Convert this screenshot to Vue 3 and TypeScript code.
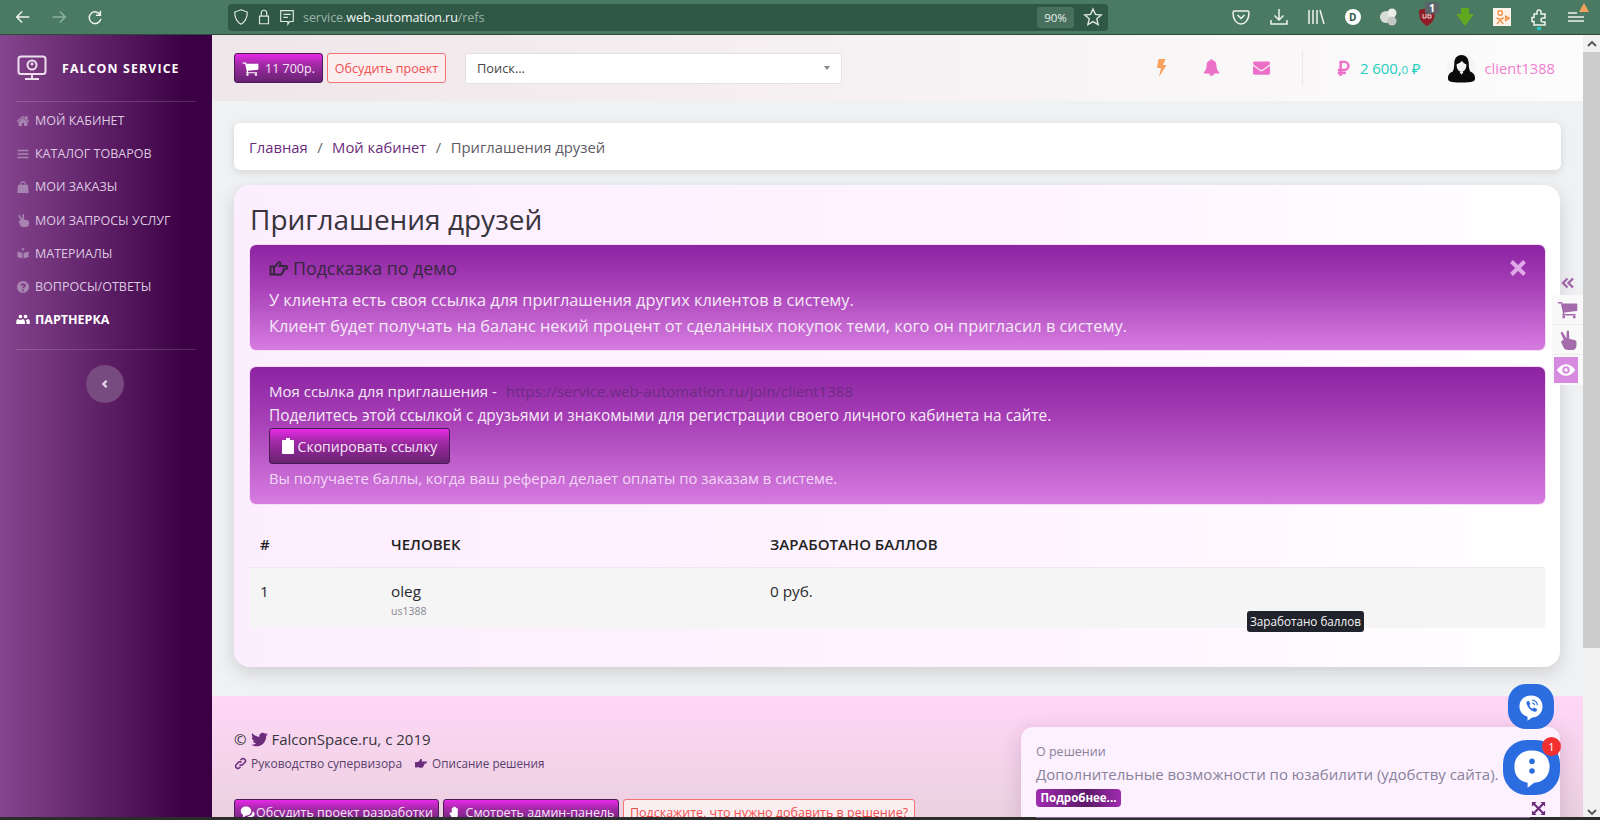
<script setup lang="ts">
interface Item { label: string; d: string; active?: boolean }
const P = {
  home: 'M1472 992v480q0 26-19 45t-45 19h-384v-384h-256v384h-384q-26 0-45-19t-19-45v-480q0-1 .5-3t.5-3l575-474 575 474q1 2 1 6zm223-69l-62 74q-8 9-21 11h-3q-13 0-21-7l-692-577-692 577q-12 8-24 7-13-2-21-11l-62-74q-8-10-7-23.5t11-21.5l719-599q32-26 76-26t76 26l244 204v-195q0-14 9-23t23-9h192q14 0 23 9t9 23v408l219 182q10 8 11 21.5t-7 23.5z',
  bars: 'M200 350h1392v190H200zM200 800h1392v190H200zM200 1250h1392v190H200z',
  bag: 'M560 600V460q0-170 150-260t376 0q146 90 146 260v140h300l80 1000q4 60-60 60H240q-64 0-60-60l80-1000zm130 0h412V460q0-110-206-140-206 30-206 140z',
  peace: 'M300 330l170-90 340 560 20-650h190l30 720 120-20q90-10 120 60l90-10q90 0 110 70 130-20 170 90v350q0 320-300 380H900q-210 0-320-170L370 1180q-50-120 60-190l150-60z',
  gift: 'M896 240a170 170 0 1 1-.1 0zM180 700l640 180v720L180 1420zM1612 700l-640 180v720l640-180z',
  q: 'M896 128a768 768 0 1 0 .1 0zM1010 1440H780v-220h230zm190-580q-60 70-150 110-40 20-40 90H780q0-140 110-200 120-60 120-130 0-60-110-60-100 0-130 110L570 650q50-240 330-240 300 0 340 220 10 140-40 230z',
  users: 'M570 220a230 230 0 1 1-.1 0zM1220 220a230 230 0 1 1-.1 0zM40 1400V1060q0-240 240-290 130 110 290 110t290-110q170 30 220 200 70 110 70 240v190zM1240 880q160 0 280-110 240 50 240 290v340h-410v-190q0-170-110-330z',
  cart: 'M704 1536q0 52-38 90t-90 38-90-38-38-90 38-90 90-38 90 38 38 90zm896 0q0 52-38 90t-90 38-90-38-38-90 38-90 90-38 90 38 38 90zm128-1088v512q0 24-16.5 42.5t-40.5 21.5l-1044 122q13 60 13 70 0 16-24 64h920q26 0 45 19t19 45-19 45-45 19h-1024q-26 0-45-19t-19-45q0-11 8-31.5t16-36 21.5-40 15.5-29.5l-177-823h-204q-26 0-45-19t-19-45 19-45 45-19h256q16 0 28.5 6.5t19.5 15.5 13 24.5 8 26 5.5 29.5 4.5 26h1201q26 0 45 19t19 45z',
  bell: 'M912 1696q0-16-16-16-59 0-101.5-42.5t-42.5-101.5q0-16-16-16t-16 16q0 73 51.5 124.5t124.5 51.5q16 0 16-16zm816-288q0 52-38 90t-90 38h-448q0 106-75 181t-181 75-181-75-75-181h-448q-52 0-90-38t-38-90q50-42 91-88t85-119.5 74.5-158.5 50-206 19.5-260q0-152 117-282.5t307-158.5q-8-19-8-39 0-40 28-68t68-28 68 28 28 68q0 20-8 39 190 28 307 158.5t117 282.5q0 139 19.5 260t50 206 74.5 158.5 85 119.5 91 88z',
  mail: 'M1792 710v794q0 66-47 113t-113 47h-1472q-66 0-113-47t-47-113v-794q44 49 101 87 362 246 497 345 57 42 92.5 65.5t94.5 48 110 24.5h2q51 0 110-24.5t94.5-48 92.5-65.5q170-123 498-345 57-39 100-87zm0-294q0 79-49 151t-122 123q-376 261-468 325-10 7-42.5 30.5t-54 38-52 32.5-57.5 27-50 9h-2q-23 0-50-9t-57.5-27-52-32.5-54-38-42.5-30.5q-91-64-262-182.5t-205-142.5q-62-42-117-115.5t-55-136.5q0-78 41.5-130t118.5-52h1472q65 0 112.5 47t47.5 113z',
  bird: 'M1684 408q-67 98-162 167 1 14 1 42 0 130-38 259.5t-115.5 248.5-184.5 210.5-258 146-323 54.5q-271 0-496-145 35 4 78 4 225 0 401-138-105-2-188-64.5t-114-159.5q33 5 61 5 43 0 85-11-112-23-185.5-111.5t-73.5-205.5v-4q68 38 146 41-66-44-105-115t-39-154q0-88 44-163 121 149 294.5 238.5t371.5 99.5q-8-38-8-74 0-134 94.5-228.5t228.5-94.5q140 0 236 102 109-21 205-78-37 115-142 178 93-10 186-50z',
  handRight: 'M1.500 8.500h3.500v8H1.500zM5 9c2-.8 3-2.500 4-4.200.7-1 2.500-.8 2.500.8 0 1-.5 1.800-.9 2.400h6.400c1.900 0 1.900 2.800 0 2.800h-2c.4 1.100-.1 2-1 2.300.3 1-.2 1.900-1.200 2.100 .1 1-.7 1.600-1.800 1.600H8.500c-1.500 0-2.500-.7-3.500-1.300z',
  paper: 'M5 9V4.500a1 1 0 0 1 2 0V8V3a1 1 0 0 1 2 0v5V3.500a1 1 0 0 1 2 0V9V5a1 1 0 0 1 2 0v8.500c0 3-2 5-4 5H8.500c-2 0-3-1-4-3l-2.300-4c-.5-1 1-2 2-1z',
}
const items: Item[] = [
  { label: 'Мой кабинет', d: P.home },
  { label: 'Каталог товаров', d: P.bars },
  { label: 'Мои заказы', d: P.bag },
  { label: 'Мои запросы услуг', d: P.peace },
  { label: 'Материалы', d: P.gift },
  { label: 'Вопросы/ответы', d: P.q },
  { label: 'Партнерка', d: P.users, active: true },
]
</script>

<template>
  <div class="page">
    <header class="browser">
      <div class="nav">
        <svg class="bi" viewBox="0 0 20 20"><path d="M17 10H4M9 4l-6 6 6 6" /></svg>
        <svg class="bi dim" viewBox="0 0 20 20"><path d="M3 10h13M11 4l6 6-6 6" /></svg>
        <svg class="bi" viewBox="0 0 20 20"><path d="M16 3v5h-5M16 8a6.500 6.500 0 1 0 .5 4" /></svg>
      </div>
      <div class="url">
        <svg class="ui" viewBox="0 0 20 20"><path d="M10 2l7 2.500c0 6-1.500 10.500-7 13.500-5.500-3-7-7.500-7-13.500z" /></svg>
        <svg class="ui" viewBox="0 0 20 20"><path d="M5 9h10v8.500H5zM7 9V5.500a3 3 0 0 1 6 0V9" /></svg>
        <svg class="ui" viewBox="0 0 20 20"><path d="M3 3h14v12h-4l-2 3v-3H3zM6 7h8M6 10.500h5" /></svg>
        <span class="addr">service.<b>web-automation.ru</b>/refs</span>
        <span class="grow"></span>
        <span class="zoom">90%</span>
        <svg class="ui star" viewBox="0 0 20 20"><path d="M10 2l2.400 5.400 5.800.6-4.400 3.800 1.300 5.700L10 14.600l-5.100 2.900 1.300-5.700L1.800 8l5.800-.6z" /></svg>
      </div>
      <div class="tools">
        <svg class="ti" viewBox="0 0 20 20"><path d="M3 4h14c1 0 1 1 1 2 0 7-4 11-8 11S2 13 2 6c0-1 0-2 1-2zM6.500 8l3.500 3.500L13.500 8" /></svg>
        <svg class="ti" viewBox="0 0 20 20"><path d="M10 2v11M5.500 8.500L10 13l4.500-4.500M2 13v4h16v-4" /></svg>
        <svg class="ti" viewBox="0 0 20 20"><path d="M3 3v14M7 3v14M11 3v14M14 3l4 14" /></svg>
        <span class="disc">D</span>
        <svg class="tf" viewBox="0 0 20 20"><circle cx="7" cy="10" r="6" fill="#d8dcd9" /><circle cx="13" cy="6" r="4.500" fill="#eceeea" /><circle cx="13" cy="14" r="4.500" fill="#c2c9c4" /></svg>
        <span class="ub">
          <svg class="tf" viewBox="0 0 20 20"><path d="M10 1l8 2c0 8-2 13-8 16C4 16 2 11 2 3z" fill="#8e1b26" /><path d="M6 7v4h3V7M11 5v6h3V8h-3" fill="none" stroke="#f2d8d8" stroke-width="1" /></svg>
          <i class="ubb">1</i>
        </span>
        <svg class="tf" viewBox="0 0 20 20"><path d="M6 1h8v6h5l-9 12L1 7h5z" fill="#5fa81f" /></svg>
        <span class="ok"><svg viewBox="0 0 20 20"><circle cx="8" cy="5.500" r="2.500" /><path d="M4 11q4 2.500 8 0M8 12.500v1M4.500 18L8 13.500l3.500 4.500M14 9l4 2.500-4 2.500z" /></svg></span>
        <span class="ext">
          <svg class="ti" viewBox="0 0 20 20"><path d="M5 7h3V5a2 2 0 0 1 4 0v2h4v4h-2a2 2 0 0 0 0 4h2v3H5v-3.500H3v-4h2z" /></svg>
          <i class="dot"></i>
        </span>
        <span class="menu">
          <svg class="ti" viewBox="0 0 20 20"><path d="M2 6h9M2 10h16M2 14h16" /></svg>
          <i class="warn"></i>
        </span>
      </div>
    </header>

    <div class="body">
      <aside class="side">
        <div class="logo">
          <svg class="mon" viewBox="0 0 30 26"><rect x="1.500" y="1.500" width="27" height="17.500" rx="2.500" /><path d="M15 19v4M8 24h14" /><circle cx="15" cy="10" r="4.500" /><circle cx="15" cy="9" r="1.500" class="fill" /></svg>
          <span class="brand">FALCON SERVICE</span>
        </div>
        <nav class="menu-list">
          <a v-for="it in items" :key="it.label" class="mi" :class="{ on: it.active }">
            <svg class="mic" viewBox="0 0 1792 1792"><path :d="it.d" /></svg>
            <span>{{ it.label }}</span>
          </a>
        </nav>
        <button class="collapse" type="button" aria-label="Свернуть">
          <svg viewBox="0 0 10 12"><path d="M7 2L3 6l4 4" /></svg>
        </button>
      </aside>

      <main class="main">
        <section class="top">
          <button class="btn prim" type="button">
            <svg class="ic15" viewBox="0 0 1792 1792"><path :d="P.cart" /></svg>
            11 700р.
          </button>
          <button class="btn out" type="button">Обсудить проект</button>
          <div class="search">
            <span>Поиск...</span>
            <i class="caret"></i>
          </div>
          <span class="grow"></span>
          <svg class="tic bolt" viewBox="0 0 14 20"><path d="M4 1h7L8.500 7H12L4.500 19 6.500 10H2.500z" /></svg>
          <svg class="tic bell" viewBox="0 0 1792 1792"><path :d="P.bell" /></svg>
          <svg class="tic mail" viewBox="0 0 1792 1792"><path :d="P.mail" /></svg>
          <i class="vline"></i>
          <svg class="rub" viewBox="0 0 14 18"><path d="M4.500 17V2h4a4.200 4.200 0 0 1 0 8.500H1.500M1.500 13.800H10" /></svg>
          <span class="money">2 600,<small>0</small> ₽</span>
          <span class="ava">
            <svg viewBox="0 0 30 30">
              <circle cx="15" cy="15" r="15" fill="#f6f4f6" />
              <path d="M15 1c5 0 7.500 4 7.500 9 0 3 .5 6 1.500 8 3 1.500 5 3 5 7 0 3-2 4.500-14 4.500S1 28 1 25c0-4 2-5.500 5-7 1-2 1.500-5 1.500-8 0-5 2.500-9 7.500-9z" fill="#0b0b0b" />
              <path d="M10 10.500c2.500-.5 4.500-2 5.500-3.500 1 2 2.500 3 4.500 3.500.4 4-2 8-5 8s-5.400-4-5-8zM13 18.500h4l-2 3z" fill="#f4f4f4" />
            </svg>
          </span>
          <span class="user">client1388</span>
        </section>

        <div class="content">
          <div class="crumbs">
            <a>Главная</a><span class="sep">/</span><a>Мой кабинет</a><span class="sep">/</span><span class="cur">Приглашения друзей</span>
          </div>

          <section class="card">
            <h1>Приглашения друзей</h1>
            <div class="alert a1">
              <div class="ahead">
                <svg class="thumb" viewBox="0 0 20 20"><path :d="P.handRight" /></svg>
                Подсказка по демо
              </div>
              <p>У клиента есть своя ссылка для приглашения других клиентов в систему.</p>
              <p>Клиент будет получать на баланс некий процент от сделанных покупок теми, кого он пригласил в систему.</p>
              <svg class="close" viewBox="0 0 20 20"><path d="M3.500 3.500l13 13M16.500 3.500l-13 13" /></svg>
            </div>
            <div class="alert a2">
              <p>Моя ссылка для приглашения - <a class="reflink">https://service.web-automation.ru/join/client1388</a></p>
              <p class="share">Поделитесь этой ссылкой с друзьями и знакомыми для регистрации своего личного кабинета на сайте.</p>
              <button class="btn prim copy" type="button">
                <svg class="clip" viewBox="0 0 12 16"><path d="M4 0h4v2h3a1 1 0 0 1 1 1v12a1 1 0 0 1-1 1H1a1 1 0 0 1-1-1V3a1 1 0 0 1 1-1h3z" /></svg>
                Скопировать ссылку
              </button>
              <p class="last">Вы получаете баллы, когда ваш реферал делает оплаты по заказам в системе.</p>
            </div>
            <div class="grid head">
              <span>#</span><span>ЧЕЛОВЕК</span><span>ЗАРАБОТАНО БАЛЛОВ</span>
            </div>
            <div class="grid row">
              <span>1</span>
              <span>oleg<small>us1388</small></span>
              <span>0 руб.</span>
            </div>
          </section>
        </div>

        <footer class="foot">
          <div class="copyr">
            © <svg class="ic17" viewBox="0 0 1792 1792"><path :d="P.bird" /></svg> FalconSpace.ru, с 2019
          </div>
          <div class="flinks">
            <a><svg class="lnk" viewBox="0 0 20 20"><path d="M8.500 11.500a3.500 3.500 0 0 0 5 0l3-3a3.500 3.500 0 0 0-5-5L10 5M11.500 8.500a3.500 3.500 0 0 0-5 0l-3 3a3.500 3.500 0 0 0 5 5L10 15" /></svg>Руководство супервизора</a>
            <a><svg class="ic13" viewBox="0 0 20 20"><path :d="P.handRight" /></svg>Описание решения</a>
          </div>
          <div class="fbtns">
            <button class="btn prim" type="button">
              <svg class="ic14" viewBox="0 0 20 20"><path d="M8 2c4 0 7 2.500 7 6s-3 6-7 6l-4 3v-4C2 12 1 10 1 8c0-3.500 3-6 7-6z" /><path d="M17 8c1.500 1 2.500 2.500 2.500 4 0 1.500-1 3-2.500 3.500V19l-4-3c-1 0-2 0-3-1 4 0 7-3 7-7z" /></svg>Обсудить проект разработки
            </button>
            <button class="btn prim" type="button">
              <svg class="ic14" viewBox="0 0 20 20"><path :d="P.paper" /></svg>
              Смотреть админ-панель
            </button>
            <button class="btn out" type="button">Подскажите, что нужно добавить в решение?</button>
          </div>
        </footer>
      </main>

      <div class="scroll">
        <span class="sbtn"><svg viewBox="0 0 10 6"><path d="M1 5l4-4 4 4" /></svg></span>
        <span class="thumbbar"></span>
        <span class="grow"></span>
        <span class="sbtn"><svg viewBox="0 0 10 6"><path d="M1 1l4 4 4-4" /></svg></span>
      </div>
    </div>

    <svg class="dbl" viewBox="0 0 14 12"><path d="M6.500 1.500L2 6l4.500 4.500M12 1.500L7.500 6l4.500 4.500" /></svg>
    <div class="widget">
      <span class="w"><svg viewBox="0 0 1792 1792"><path :d="P.cart" /></svg></span>
      <span class="w"><svg viewBox="0 0 1792 1792"><path :d="P.peace" /></svg></span>
      <span class="w eye"><svg viewBox="0 0 24 16"><path d="M1 8c3-4.500 7-7 11-7s8 2.500 11 7c-3 4.500-7 7-11 7S4 12.500 1 8z" fill="#fff" /><circle cx="12" cy="8" r="4.500" fill="#d78be0" /><circle cx="12" cy="8" r="2" fill="#fff" /></svg></span>
    </div>

    <div class="tip">Заработано баллов</div>

    <div class="popup">
      <div class="pt">О решении</div>
      <div class="pm">Дополнительные возможности по юзабилити (удобству сайта).</div>
      <span class="more">Подробнее...</span>
      <svg class="exp" viewBox="0 0 16 16"><path d="M1 1h5L4.300 2.700 8 6.400l3.700-3.700L10 1h5v5l-1.700-1.700L9.600 8l3.700 3.700L15 10v5h-5l1.700-1.700L8 9.600l-3.700 3.700L6 15H1v-5l1.700 1.700L6.400 8 2.700 4.300 1 6z" /></svg>
    </div>
    <div class="viber">
      <svg viewBox="0 0 26 26"><path d="M13 3c6 0 10 4 10 9.500S19 22 14 22l-4 3v-3.500C6 20 3 17 3 12.500 3 7 7 3 13 3z" fill="#fff" /><path d="M9 8.500l2-1 1.500 3-1 1c.5 1.500 1.500 2.500 3 3l1-1 3 1.500-1 2c-4 .5-8.500-4-8.500-8.500z" fill="#2b6ce0" /><path d="M14 7c2.500 0 4.500 2 4.500 4.500M14 9.500c1 0 2 1 2 2" fill="none" stroke="#2b6ce0" stroke-width="1" /></svg>
    </div>
    <div class="chat">
      <svg viewBox="0 0 30 30"><path d="M15 3c7.500 0 12 4.500 12 11s-4.500 11-10.500 11L12 28.500V25C6 24 3 20 3 14 3 7.500 7.500 3 15 3z" fill="#fff" /><circle cx="15" cy="10.500" r="1.900" fill="#2b6ce0" /><circle cx="15" cy="17" r="1.900" fill="#2b6ce0" /></svg>
      <i class="badge">1</i>
    </div>
    <i class="edge"></i>
    <i class="pline"></i>
  </div>
</template>

<style>
html, body { margin: 0; padding: 0; overflow: hidden; }
</style>

<style scoped>
.page {
  position: relative;
  width: 1600px;
  height: 820px;
  overflow: hidden;
  display: flex;
  flex-direction: column;
  font-family: "Open Sans", "Noto Sans", sans-serif;
  color: #2b2b33;
  background: #f0f1f3;
}
.grow { flex: 1; }
svg { display: block; flex: none; }
a { color: inherit; text-decoration: none; }
p { margin: 0; }

/* browser */
.browser {
  flex: none;
  height: 35px;
  box-sizing: border-box;
  display: flex;
  align-items: center;
  background: #4a7a62;
  border-bottom: 1px solid #2c4a3c;
}
.nav { width: 228px; display: flex; align-items: center; gap: 18px; padding-left: 14px; box-sizing: border-box; }
.bi { width: 18px; height: 18px; fill: none; stroke: #f0f5f2; stroke-width: 1.6; }
.bi.dim { stroke: #8fb3a1; }
.url {
  width: 880px;
  height: 27px;
  box-sizing: border-box;
  padding: 0 5px 0 4px;
  display: flex;
  align-items: center;
  gap: 5px;
  background: #2f5846;
  border-radius: 4px;
}
.ui { width: 18px; height: 18px; fill: none; stroke: #dfe8e3; stroke-width: 1.3; }
.addr { font: 12.600px "Open Sans", sans-serif; color: #9db5a9; margin-left: 2px; letter-spacing: -0.1px; }
.addr b { font-weight: 400; color: #f2f6f4; }
.zoom { width: 37px; height: 21px; line-height: 21px; text-align: center; font-size: 11.500px; color: #e8efeb; background: #47705d; border-radius: 3px; }
.star { width: 20px; height: 20px; margin-left: 4px; stroke-width: 1.4; }
.tools { flex: 1; display: flex; align-items: center; gap: 17.600px; padding-left: 123px; }
.ti { width: 20px; height: 20px; fill: none; stroke: #eef3f0; stroke-width: 1.5; }
.tf { width: 20px; height: 20px; }
.disc { width: 16px; height: 16px; border-radius: 50%; background: #fff; color: #2d5544; font-size: 10px; font-weight: 700; line-height: 16px; text-align: center; margin: 0 1px; }
.ub { position: relative; display: block; }
.ubb { position: absolute; left: 8px; top: -5px; width: 14px; height: 12px; background: #5a6468; color: #fff; font: 700 10.500px/12px "Open Sans", sans-serif; text-align: center; border-radius: 2px; }
.ok { width: 18px; height: 18px; background: #fdf3ea; display: block; margin-left: 1px; }
.ok svg { width: 18px; height: 18px; fill: none; stroke: #ee8a3c; stroke-width: 1.4; }
.ext, .menu { position: relative; display: block; }
.dot { position: absolute; left: 8px; top: 20px; width: 4px; height: 3px; background: #20c8c8; }
.warn { position: absolute; right: -3px; top: -4px; width: 0; height: 0; border-left: 5px solid transparent; border-right: 5px solid transparent; border-bottom: 9px solid #f2a25c; }

.body { flex: 1; min-height: 0; display: flex; }

/* sidebar */
.side {
  flex: none;
  width: 212px;
  background: linear-gradient(90deg, #86468f 0%, #3b0044 88%, #3b0044 100%);
  display: flex;
  flex-direction: column;
  align-items: center;
}
.logo { width: 180px; height: 67px; display: flex; align-items: center; gap: 15px; border-bottom: 1px solid rgba(255, 255, 255, 0.16); box-sizing: border-box; padding-left: 1px; }
.mon { width: 30px; height: 26px; fill: none; stroke: #ece0ee; stroke-width: 2; }
.mon .fill { fill: #ece0ee; stroke: none; }
.brand { color: #fff; font-size: 12.300px; font-weight: 700; letter-spacing: 1.150px; white-space: nowrap; }
.menu-list { width: 180px; box-sizing: border-box; padding: 2px 0 13px; border-bottom: 1px solid rgba(255, 255, 255, 0.16); }
.mi {
  height: 33.200px;
  display: flex;
  align-items: center;
  gap: 5px;
  font-size: 12.500px;
  color: #dcc8e0;
  text-transform: uppercase;
  white-space: nowrap;
}
.mic { width: 14px; height: 14px; fill: #a884b0; }
.mi.on { color: #fff; font-weight: 700; }
.mi.on .mic { fill: #fff; }
.collapse { margin-top: 15px; margin-right: 2px; width: 38px; height: 38px; border: 0; padding: 0; border-radius: 50%; background: #774a80; display: flex; align-items: center; justify-content: center; }
.collapse svg { width: 8px; height: 10px; fill: none; stroke: #e8dcea; stroke-width: 2.800; }

/* main */
.main { flex: 1; min-width: 0; display: flex; flex-direction: column; overflow: hidden; }
.top {
  flex: none;
  height: 66px;
  box-sizing: border-box;
  display: flex;
  align-items: center;
  padding: 0 28px 0 22px;
  background: linear-gradient(90deg, #efe6ea 0%, #f8f4f6 60%, #fcfcfc 100%);
}
.btn {
  height: 30px;
  box-sizing: border-box;
  display: inline-flex;
  align-items: center;
  justify-content: center;
  gap: 5px;
  padding: 0;
  border-radius: 3px;
  font-family: "Open Sans", sans-serif;
  font-size: 12.500px;
  white-space: nowrap;
}
.prim { color: #f6e6f8; border: 1px solid #4c1a55; background: linear-gradient(180deg, #e828e8 0%, #a42aa8 35%, #672270 100%); }
.out { color: #f04f4f; border: 1px solid #f47272; background: #fbeef0; }
.top .prim { width: 89px; gap: 6px; }
.top .out { width: 119px; margin-left: 4px; }
.ic15 { width: 17px; height: 17px; fill: #fff; }
.search {
  width: 377px;
  height: 31px;
  margin-left: 19px;
  box-sizing: border-box;
  padding: 0 11px;
  display: flex;
  align-items: center;
  justify-content: space-between;
  background: #fff;
  border: 1px solid #e6e0e4;
  border-radius: 2px;
  font-size: 12.800px;
  color: #444;
}
.caret { width: 0; height: 0; border-left: 3.500px solid transparent; border-right: 3.500px solid transparent; border-top: 4px solid #888; }
.tic { width: 17px; height: 17px; margin-top: -1px; }
.bolt { fill: #f6a25e; margin-right: 34px; width: 15px; height: 20px; }
.bell { fill: #ec70c8; margin-right: 33px; }
.mail { fill: #ec70c8; }
.vline { width: 1px; height: 36px; background: #ece8ea; margin: 0 33px 0 32px; }
.rub { width: 14px; height: 17px; fill: none; stroke: #ec70c8; stroke-width: 2.600; }
.money { margin-left: 10px; color: #22d0c0; font-size: 15px; letter-spacing: -0.1px; white-space: nowrap; }
.money small { font-size: 11.500px; }
.ava { width: 29px; height: 29px; margin-left: 27px; }
.ava svg { width: 29px; height: 29px; }
.user { margin-left: 8px; color: #f07fd0; font-size: 14.700px; white-space: nowrap; }

.content { flex: none; padding: 22px 22px 29px; }
.crumbs {
  height: 47px;
  box-sizing: border-box;
  display: flex;
  align-items: center;
  padding-left: 15px;
  background: #fff;
  border-radius: 6px;
  box-shadow: 0 2px 8px rgba(0, 0, 0, 0.12);
  font-size: 14.800px;
  color: #6b2c7c;
}
.sep { color: #666; margin: 0 9.500px; }
.cur { color: #5e5a66; }
.card {
  margin: 15px 1px 0 0;
  height: 482px;
  box-sizing: border-box;
  padding: 16px 15px 0 16px;
  border-radius: 16px;
  background: linear-gradient(90deg, #fdeeff 0%, #fff4ff 60%, #ffffff 100%);
  box-shadow: 0 6px 18px rgba(0, 0, 0, 0.14);
}
h1 { margin: 0; height: 44px; font-size: 28px; line-height: 36px; font-weight: 400; color: #37343c; }
.alert {
  position: relative;
  box-sizing: border-box;
  padding-left: 19px;
  border-radius: 6px;
  background: linear-gradient(180deg, #8c24a2 0%, #a43cb4 35%, #d67ce0 100%);
  box-shadow: 0 0 0 1px #f6dcf8;
  color: #f5e9f7;
}
.a1 { height: 105px; padding-top: 10px; margin-bottom: 17px; font-size: 16.350px; }
.a1 p { line-height: 26px; white-space: nowrap; }
.ahead { height: 32px; line-height: 26px; display: flex; align-items: flex-start; gap: 4px; color: #38263f; font-size: 17.800px; }
.thumb { width: 20px; height: 20px; margin-top: 3px; fill: none; stroke: #38263f; stroke-width: 2; }
.close { position: absolute; right: 17px; top: 13px; width: 20px; height: 20px; fill: none; stroke: #e0a8e8; stroke-width: 4; }
.a2 { height: 137px; padding-top: 12px; font-size: 15px; }
.a2 p { line-height: 24px; white-space: nowrap; }
.a2 .share { font-size: 15.400px; padding-top: 1px; }
.reflink { color: #6e2c84; margin-left: 5px; }
.copy { width: 181px; height: 36px; font-size: 14px; margin-top: 0; display: flex; gap: 4px; }
.clip { width: 12px; height: 16px; fill: #fff; }
.a2 .last { margin-top: 2px; color: #f3d8f6; font-size: 14.850px; }
.grid {
  display: grid;
  grid-template-columns: 131px 379px 1fr;
  padding-left: 10px;
}
.head { margin-top: 21px; height: 43px; padding-bottom: 5px; box-sizing: border-box; align-items: center; font-size: 15px; font-weight: 600; color: #222; border-bottom: 1px solid #ece8ee; }
.row { height: 60px; background: #f5f5f5; font-size: 15.300px; padding-top: 13px; box-sizing: border-box; line-height: 20px; color: #2a2a30; }
.row small { display: block; font-size: 10.500px; line-height: 20px; color: #8a8894; }

/* footer */
.foot {
  flex: 1;
  padding: 32px 22px 0;
  background: linear-gradient(180deg, #ffd7f7 0%, #e9d0de 100%);
}
.copyr { display: flex; align-items: center; gap: 2px; font-size: 15px; line-height: 22px; color: #37343c; }
.ic17 { width: 19px; height: 19px; fill: #6b2c7c; margin: 0 0 0 2px; }
.flinks { margin-top: 1px; height: 24px; display: flex; gap: 12px; align-items: center; font-size: 12px; color: #59406c; }
.flinks a { display: flex; align-items: center; gap: 4px; }
.flinks a + a { font-size: 11.700px; }
.lnk { width: 13px; height: 13px; fill: none; stroke: #6b2c7c; stroke-width: 2.400; }
.ic13 { width: 14px; height: 14px; fill: #6b2c7c; }
.fbtns { margin-top: 24px; display: flex; gap: 4px; }
.fbtns .btn { height: 26px; font-size: 12.500px; }
.fbtns .btn:nth-child(1) { width: 205px; gap: 1px; }
.fbtns .btn:nth-child(2) { width: 176px; gap: 3px; }
.fbtns .btn:nth-child(3) { width: 292px; }
.ic14 { width: 15px; height: 15px; fill: #fff; }

/* scrollbar */
.scroll { flex: none; width: 17px; display: flex; flex-direction: column; background: #f1f1f1; }
.sbtn { height: 17px; display: flex; align-items: center; justify-content: center; }
.sbtn svg { width: 10px; height: 6px; fill: none; stroke: #505050; stroke-width: 1.800; }
.thumbbar { height: 596px; background: #cdcdcd; }

/* overlays */
.dbl { position: absolute; left: 1561px; top: 277px; width: 14px; height: 12px; fill: none; stroke: #a066a8; stroke-width: 2.400; }
.widget { position: absolute; left: 1552px; top: 295px; width: 31px; height: 90px; background: #f9f9f9; border-radius: 4px 0 0 4px; }
.w { display: flex; height: 30px; box-sizing: border-box; align-items: center; justify-content: center; border-bottom: 1px solid #ececec; }
.w svg { width: 21px; height: 21px; fill: #a56cac; }
.eye { width: 24px; height: 26px; margin: 2px 0 0 2px; border: 0; background: #d78be0; }
.eye svg { width: 20px; height: 14px; }
.tip {
  position: absolute;
  left: 1247px;
  top: 611px;
  width: 117px;
  height: 21px;
  box-sizing: border-box;
  background: #20222c;
  border-radius: 3px;
  color: #f4f4f4;
  font-size: 11.700px;
  line-height: 20px;
  text-align: center;
  white-space: nowrap;
}
.popup {
  position: absolute;
  left: 1021px;
  top: 727px;
  width: 539px;
  height: 100px;
  box-sizing: border-box;
  padding: 16px 0 0 15px;
  background: #fdf0ff;
  border-radius: 12px;
  box-shadow: 0 4px 20px rgba(90, 30, 90, 0.18);
}
.pt { font-size: 12.500px; line-height: 17px; color: #88829a; }
.pm { margin-top: 2px; font-size: 15px; line-height: 24px; color: #88829a; white-space: nowrap; }
.more { display: block; margin-top: 3px; width: 85px; height: 18px; border-radius: 4px; background: linear-gradient(90deg, #a02cb0, #5c1868 60%, #a02cb0); color: #fff; font-size: 11.500px; font-weight: 700; line-height: 18px; text-align: center; }
.exp { position: absolute; right: 14px; top: 74px; width: 15px; height: 15px; fill: #6b2c7c; }
.viber, .chat { position: absolute; display: flex; align-items: center; justify-content: center; background: #2b6ce0; }
.viber { left: 1508px; top: 684px; width: 46px; height: 45px; border-radius: 18px; }
.viber svg { width: 30px; height: 30px; }
.chat { left: 1503px; top: 740px; width: 57px; height: 55px; border-radius: 24px; }
.chat svg { width: 44px; height: 44px; }
.badge { position: absolute; right: -1px; top: -3px; width: 19px; height: 19px; border-radius: 50%; background: #f23030; color: #fff; font: 400 11px/19px "Open Sans", sans-serif; text-align: center; }
.edge { position: absolute; left: 0; right: 0; bottom: 0; height: 3px; background: #2c2c2c; }
.pline { position: absolute; left: 1036px; top: 817px; width: 494px; height: 1px; background: #8b6b9a; }
</style>
